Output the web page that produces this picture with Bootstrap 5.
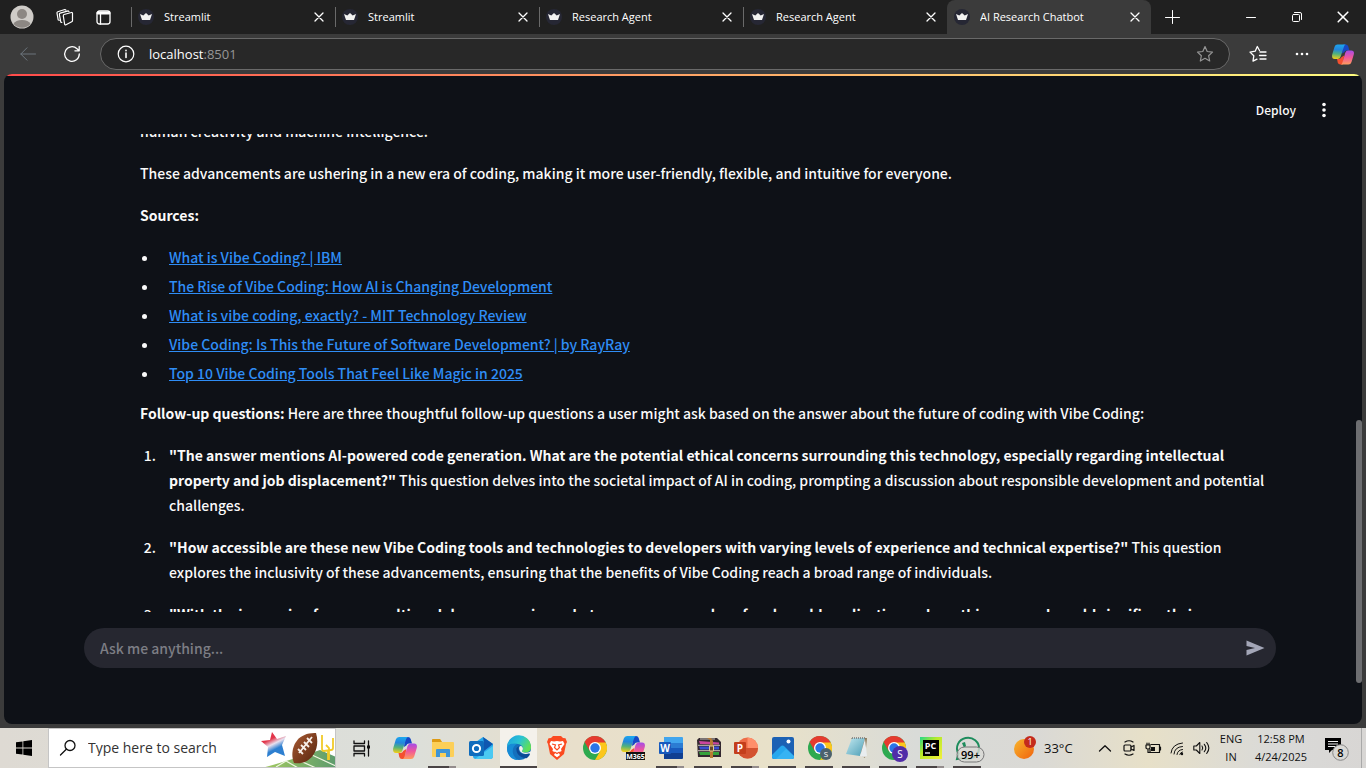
<!DOCTYPE html>
<html lang="en" data-bs-theme="dark">
<head>
<meta charset="utf-8">
<meta name="viewport" content="width=device-width, initial-scale=1">
<title>AI Research Chatbot</title>
<link href="https://cdn.jsdelivr.net/npm/bootstrap@5.3.0/dist/css/bootstrap.min.css" rel="stylesheet">
<style>
  body { background:#3b3b3b; color:#fff; font-family:"Open Sans","Noto Sans",sans-serif; font-size:12px; line-height:16px; }
  button { background:none; border:0; padding:0; color:inherit; font:inherit; }
  svg { display:block; flex:none; overflow:visible; }
  .ln { fill:none; stroke:currentColor; stroke-linecap:round; stroke-linejoin:round; }

  /* title bar */
  .titlebar { height:34px; background:#202020; }
  .lead-icons { width:131px; padding:0 20px 0 10px; gap:19px; }
  .tabitem { flex:0 1 204px; min-width:0; height:34px; padding:0 11px 0 7px; position:relative; font-size:11px; }
  .tabitem::before { content:""; position:absolute; left:0; top:7px; height:20px; width:1px; background:#6a6a6a; }
  .tabitem.current { background:#3b3b3b; border-radius:8px 8px 0 0; }
  .tabitem.current::before { content:none; }
  .fav { margin-right:10px; }
  .winbtn { width:46px; height:34px; display:grid; place-items:center; }
  .newtab { width:41px; }

  /* toolbar */
  .toolbar { height:40px; padding:0 12px 0 18px; }
  .navbtn { width:20px; height:20px; display:grid; place-items:center; }
  .pilotbtn { width:22px; height:22px; margin-left:20px; }
  .urlbox { height:32px; margin:0 18px; background:#282828; border:1px solid #696969; border-radius:16px; padding:0 15px 0 16px; }
  .urlbox .addr { font-size:13px; margin-left:14px; }
  .addr .port { color:#969696; }

  /* application */
  .app { margin:0 4px 4px; background:#0e1117; border-radius:8px; position:relative; overflow:hidden; font-family:"Noto Sans CJK SC","Source Sans Pro",sans-serif; font-size:14px; line-height:26px; min-height:0; color:#fafafa; }
  .rainbow { height:2px; flex:none; background:linear-gradient(90deg,#ff4b4b,#fffd80); }
  .apphead { height:58px; flex:none; padding:10px 30px 0 0; gap:20px; font-size:12px; font-weight:500; }
  .chat { padding:0 86px 0 136px; min-height:0; }
  .chat-body { margin-top:-16px; font-weight:500; }
  .chat p { margin-bottom:16px; }
  .chat ul, .chat ol { padding:0; }
  .chat li { margin:0 0 0 19px; padding-left:10px; }
  .chat ul { margin:0 0 14px; }
  .chat ul li + li { margin-top:3px; }
  .chat ul a { color:#2f8df5; }
  .chat ol { margin:17px 0 0; line-height:25px; }
  .chat ol li + li { margin-top:17px; }
  .askwrap { padding:16px 86px 56px 80px; }
  .ask { height:40px; background:#262730; border-radius:20px; padding:0 11px 0 16px; }
  .ask input { background:none; border:0; outline:0; color:#fafafa; font-weight:500; min-width:0; padding:0; }
  .ask input::placeholder { color:#7d7e85; opacity:1; }
  .thumb { position:absolute; right:0; bottom:41px; width:6px; height:263px; border-radius:3px; background:#6d6e71; }

  /* taskbar */
  .taskbar { height:40px; flex:none; color:#111; background:linear-gradient(90deg,#dedad3 0,#dcdfda 30%,#e8dfcb 42%,#e8e1c9 57%,#d9dbd8 67%,#dad9d5 76%,#e7e0c8 84%,#dadad8 93%,#d8d6d4 100%); }
  .startbtn { width:48px; height:40px; display:grid; place-items:center; flex:none; }
  .searchbox { width:288px; height:40px; background:#fff; border:1px solid #c5c5c5; padding-left:10px; overflow:hidden; }
  .searchbox input { border:0; outline:0; background:none; color:#222; width:170px; padding:0; margin-left:11px; font-size:14px; }
  .searchbox input::placeholder { color:#333; opacity:1; }
  .tk { width:37px; height:40px; position:relative; display:grid; place-items:center; flex:none; }
  .tk.taskview { margin:0 6px 0 7px; }
  .tk.open::after { content:""; position:absolute; left:4px; bottom:0; width:28px; height:2px; background:#4a4445; }
  .tk.multi::after { background:linear-gradient(90deg,#4a4445 75%,#938c8c 75%); }
  .tk.front { background:#f4f1eb; }
  .tk.front::after { left:0; width:37px; }
  .pinned { column-gap:1px; }
  .tray { padding-right:4px; }
  .tray button { width:24px; height:40px; display:grid; place-items:center; }
  .temp { font-size:13px; width:49px; }
  .stacked { font-size:11px; line-height:18px; text-align:center; }
  .lang { width:36px; }
  .clock { width:64px; }
  .tray .notif { width:48px; }
  .edge-line { width:1px; height:40px; background:#a9a9a9; }
</style>
</head>
<body class="d-flex flex-column vh-100 overflow-hidden">

<svg width="0" height="0" class="position-absolute" aria-hidden="true">
  <defs>
    <linearGradient id="cpA" x1=".4" y1="0" x2=".3" y2="1"><stop offset="0" stop-color="#1ca6ee"/><stop offset=".35" stop-color="#2486dc"/><stop offset=".65" stop-color="#52b27a"/><stop offset="1" stop-color="#f5cf17"/></linearGradient>
    <linearGradient id="cpB" x1="0" y1="0" x2="0" y2="1"><stop offset="0" stop-color="#a54be8"/><stop offset=".5" stop-color="#f0579b"/><stop offset="1" stop-color="#ff9d5c"/></linearGradient>
    <linearGradient id="edA" x1="0" y1="0" x2="1" y2=".5"><stop offset="0" stop-color="#1b9de2"/><stop offset=".55" stop-color="#2bc3d2"/><stop offset="1" stop-color="#5fdf57"/></linearGradient>
    <linearGradient id="wea" x1="0" y1="0" x2="1" y2="1"><stop offset="0" stop-color="#f8b62c"/><stop offset="1" stop-color="#f0620f"/></linearGradient>
    <linearGradient id="ball" x1="0" y1="0" x2="1" y2="1"><stop offset="0" stop-color="#a95a33"/><stop offset="1" stop-color="#57260f"/></linearGradient>
    <linearGradient id="star" x1=".2" y1="0" x2=".7" y2="1"><stop offset=".3" stop-color="#e2354a"/><stop offset=".5" stop-color="#e8e0ee"/><stop offset=".7" stop-color="#2d7fd0"/></linearGradient>
    <linearGradient id="grass" x1="0" y1="0" x2="1" y2="0"><stop offset="0" stop-color="#a7cd60"/><stop offset="1" stop-color="#5d9b6d"/></linearGradient>
    <linearGradient id="note" x1="0" y1="0" x2="1" y2="1"><stop offset="0" stop-color="#c3e9f0"/><stop offset="1" stop-color="#4b9db5"/></linearGradient>
    <linearGradient id="pyc" x1="0" y1="0" x2="1" y2="1"><stop offset="0" stop-color="#21d789"/><stop offset=".4" stop-color="#b6ea2a"/><stop offset="1" stop-color="#f2ef38"/></linearGradient>
    <symbol id="copilot" viewBox="0 0 24 22">
      <path d="M5.500 16h2q2 0 2.700-2l3-2-1.200 10H9q-2 0-2.700-2z" fill="#f4502f"/>
      <path d="M12 0h3q2 0 2.700 2L19 6.500h-3q-2 0-2.700 2L11 10z" fill="#1748c6"/>
      <path d="M6 0h9q-1.500.5-2 2.500L9.500 13.300Q8.700 16 6.500 16H3C0 16-.4 13 .4 10.500L2.800 2.500Q3.600 0 6 0z" fill="url(#cpA)"/>
      <path d="M18 22H9.500q1.500-.5 2-2.500L14.500 9q.8-2.500 3-2.500H21c3 0 3.400 2.500 2.600 5l-2.400 8Q20.400 22 18 22z" fill="url(#cpB)"/>
    </symbol>
    <symbol id="chrome" viewBox="0 0 24 24">
      <circle cx="12" cy="12" r="12" fill="#2da94f"/>
      <path d="M22.400 6A12 12 0 0 1 12 24l5.200-9L12 6z" fill="#fcc61c"/>
      <path d="M1.600 6L6.800 15 12 6.500h10.600A12 12 0 0 0 1.600 6z" fill="#e53b2f"/>
      <circle cx="12" cy="12" r="6" fill="#fff"/><circle cx="12" cy="12" r="4.700" fill="#2b75e8"/>
    </symbol>
    <symbol id="crown" viewBox="0 0 16 16">
      <circle cx="8" cy="8" r="8" fill="#262734"/>
      <path d="M2 5l3.300 1.500L8 4l2.700 2.500L14 5l-2 6H4z" fill="#f2f2f2"/>
    </symbol>
    <symbol id="cross" viewBox="0 0 10 10"><path d="M1 1l8 8M9 1l-8 8" class="ln" stroke-width="1.300"/></symbol>
  </defs>
</svg>

<header>
  <div class="titlebar d-flex align-items-center">
    <div class="lead-icons d-flex align-items-center flex-shrink-0 justify-content-between">
      <button aria-label="Profile"><svg width="24" height="24" viewBox="0 0 24 24"><circle cx="12" cy="12" r="11.500" fill="#cfccc8"/><circle cx="12" cy="9" r="5" fill="#8c8783"/><path d="M3.500 19a9 6 0 0 1 17 0 11.500 11.500 0 0 1-17 0z" fill="#8c8783"/></svg></button>
      <button aria-label="Workspaces"><svg width="18" height="18" viewBox="0 0 18 18" class="ln" stroke-width="1.200"><path d="M8 6.500l7.500-2q1-.2 1 .8v7.200q0 1-.8 1.300L10 16.800q-1.300.5-1.400-.8L7.300 8q0-1.200.7-1.500zM5.800 14.500l-1-.4-1.400-7.500q-.2-1.200.8-1.500l8-2.300.8.900M3.200 12.300l-1-.3L1 5.200Q.8 4 1.800 3.700l7-2.200 1 .6"/></svg></button>
      <button aria-label="Tab actions"><svg width="15" height="15" viewBox="0 0 15 15" class="ln" stroke-width="1.300"><rect x="1" y="1" width="13" height="13" rx="2.500"/><path d="M2 3h11" stroke-width="3"/><path d="M4.500 4v10"/></svg></button>
    </div>
    <div class="tabitem d-flex align-items-center"><svg class="fav" width="16" height="16"><use href="#crown"/></svg><span class="flex-fill text-truncate">Streamlit</span><button aria-label="Close tab"><svg width="10" height="10"><use href="#cross"/></svg></button></div>
    <div class="tabitem d-flex align-items-center"><svg class="fav" width="16" height="16"><use href="#crown"/></svg><span class="flex-fill text-truncate">Streamlit</span><button aria-label="Close tab"><svg width="10" height="10"><use href="#cross"/></svg></button></div>
    <div class="tabitem d-flex align-items-center"><svg class="fav" width="16" height="16"><use href="#crown"/></svg><span class="flex-fill text-truncate">Research Agent</span><button aria-label="Close tab"><svg width="10" height="10"><use href="#cross"/></svg></button></div>
    <div class="tabitem d-flex align-items-center"><svg class="fav" width="16" height="16"><use href="#crown"/></svg><span class="flex-fill text-truncate">Research Agent</span><button aria-label="Close tab"><svg width="10" height="10"><use href="#cross"/></svg></button></div>
    <div class="tabitem current d-flex align-items-center"><svg class="fav" width="16" height="16"><use href="#crown"/></svg><span class="flex-fill text-truncate">AI Research Chatbot</span><button aria-label="Close tab"><svg width="10" height="10"><use href="#cross"/></svg></button></div>
    <button class="winbtn newtab" aria-label="New tab"><svg width="14" height="14" viewBox="0 0 14 14" class="ln"><path d="M7.500.5v13M.5 7.500h14"/></svg></button>
    <button class="winbtn ms-auto" aria-label="Minimize"><svg width="10" height="10" viewBox="0 0 10 10" class="ln"><path d="M.5 5.500h9"/></svg></button>
    <button class="winbtn" aria-label="Restore"><svg width="10" height="10" viewBox="0 0 10 10" class="ln"><rect x=".5" y="2.500" width="7" height="7" rx="1"/><path d="M2.500.5H8q1.500 0 1.500 1.500v5.500"/></svg></button>
    <button class="winbtn" aria-label="Close"><svg width="12" height="12"><use href="#cross"/></svg></button>
  </div>
  <div class="toolbar d-flex align-items-center">
    <button class="navbtn text-secondary" aria-label="Back"><svg width="16" height="14" viewBox="0 0 16 14" class="ln"><path d="M15.500 7H.8M7 .8L.8 7 7 13.200"/></svg></button>
    <button class="navbtn ms-4" aria-label="Refresh"><svg width="16" height="16" viewBox="0 0 16 16" class="ln" stroke-width="1.300"><path d="M15.300 8A7.300 7.300 0 1 1 13 2.700L15 4.600M15.200.5v4.300h-4.300"/></svg></button>
    <div class="urlbox d-flex align-items-center flex-fill">
      <svg width="18" height="18" viewBox="0 0 18 18" class="ln" stroke-width="1.200"><circle cx="9" cy="9" r="7.800"/><path d="M9 8v4.500M9 5.300v.4" stroke-width="1.600"/></svg>
      <span class="addr flex-fill">localhost<span class="port">:8501</span></span>
      <button class="text-white-50" aria-label="Add to favorites"><svg width="18" height="18" viewBox="0 0 18 18" class="ln" stroke-width="1.200"><path d="M9 1.500l2.200 5 5.300.6-3.900 3.600 1.100 5.300L9 13.300 4.300 16l1.100-5.300L1.500 7.100l5.300-.6z"/></svg></button>
    </div>
    <button class="navbtn" aria-label="Favorites"><svg width="18" height="18" viewBox="0 0 18 18" class="ln" stroke-width="1.300"><path d="M10.500 5.500L8.300 1.500 6.200 6.200 1 7.100l3.800 3.700L4 16.200l4-2M11 7h6M10.500 10.500H17M11 14h6"/></svg></button>
    <button class="navbtn ms-4" aria-label="Settings and more"><svg width="14" height="4" viewBox="0 0 14 4" fill="currentColor"><circle cx="2" cy="2" r="1.300"/><circle cx="7" cy="2" r="1.300"/><circle cx="12" cy="2" r="1.300"/></svg></button>
    <button class="pilotbtn" aria-label="Copilot"><svg width="22" height="21"><use href="#copilot"/></svg></button>
  </div>
</header>

<main class="app d-flex flex-column flex-fill">
  <div class="rainbow"></div>
  <div class="apphead d-flex align-items-center justify-content-end">
    <button>Deploy</button>
    <button aria-label="Menu"><svg width="16" height="16" viewBox="0 0 16 16" fill="currentColor"><circle cx="8" cy="2.500" r="1.800"/><circle cx="8" cy="8" r="1.800"/><circle cx="8" cy="13.500" r="1.800"/></svg></button>
  </div>
  <section class="chat flex-fill overflow-hidden">
    <div class="chat-body">
      <p>human creativity and machine intelligence.</p>
      <p>These advancements are ushering in a new era of coding, making it more user-friendly, flexible, and intuitive for everyone.</p>
      <p><strong>Sources:</strong></p>
      <ul>
        <li><a href="#">What is Vibe Coding? | IBM</a></li>
        <li><a href="#">The Rise of Vibe Coding: How AI is Changing Development</a></li>
        <li><a href="#">What is vibe coding, exactly? - MIT Technology Review</a></li>
        <li><a href="#">Vibe Coding: Is This the Future of Software Development? | by RayRay</a></li>
        <li><a href="#">Top 10 Vibe Coding Tools That Feel Like Magic in 2025</a></li>
      </ul>
      <p><strong>Follow-up questions:</strong> Here are three thoughtful follow-up questions a user might ask based on the answer about the future of coding with Vibe Coding:</p>
      <ol>
        <li><strong>"The answer mentions AI-powered code generation. What are the potential ethical concerns surrounding this technology, especially regarding intellectual property and job displacement?"</strong> This question delves into the societal impact of AI in coding, prompting a discussion about responsible development and potential challenges.</li>
        <li><strong>"How accessible are these new Vibe Coding tools and technologies to developers with varying levels of experience and technical expertise?"</strong> This question explores the inclusivity of these advancements, ensuring that the benefits of Vibe Coding reach a broad range of individuals.</li>
        <li><strong>"With the increasing focus on multimodal programming, what are some examples of real-world applications where this approach could significantly improve</strong></li>
      </ol>
    </div>
  </section>
  <div class="askwrap">
    <form class="ask d-flex align-items-center">
      <input class="flex-fill" type="text" placeholder="Ask me anything..." aria-label="Ask me anything">
      <button type="button" aria-label="Send"><svg width="19" height="16" viewBox="0 0 19 16"><path d="M.5.500L18.500 8 .5 15.500V10L9 8 .5 6z" fill="#a3a6b7"/></svg></button>
    </form>
  </div>
  <div class="thumb"></div>
</main>

<footer class="taskbar d-flex align-items-center">
  <button class="startbtn" aria-label="Start"><svg width="16" height="16" viewBox="0 0 16 16"><path d="M0 2.300L6.500 1.400V7.500H0zM7.300 1.200L16 0v7.500H7.300zM0 8.400h6.500v6.200L0 13.700zM7.300 8.400H16V16l-8.700-1.200z"/></svg></button>
  <div class="searchbox d-flex align-items-center flex-shrink-0">
    <svg width="18" height="18" viewBox="0 0 18 18" class="ln" stroke-width="1.300"><circle cx="11" cy="6.500" r="5"/><path d="M7.300 10.200L1.500 16"/></svg>
    <input type="text" placeholder="Type here to search" aria-label="Type here to search">
    <svg class="ms-auto" width="78" height="38" viewBox="0 0 78 38">
      <path d="M0 40Q34 31 62 21L78 28V40z" fill="url(#grass)"/>
      <path d="M18 38l10-6 14 8M38 30l20 9M54 26l26 12" fill="none" stroke="#eef6df" stroke-width="1.200"/>
      <path d="M14 3l5 7 9-3-4 9 3 11-10-4-8 5 1-10-7-6 9-1z" fill="url(#star)"/>
      <path d="M36 34C31 22 37 3 58 4c5 16-5 33-22 30z" fill="url(#ball)"/>
      <path d="M41 24L54 8M40 20l5 5M43 16l5 5M46 13l5 5M49 9l5 5" stroke="#f7efe9" stroke-width="1.800" fill="none"/>
      <path d="M64 6v14q0 2 2 2l7-1q2 0 2-2V9M70 22v9M68 16l3 3v12" stroke="#f1ca28" stroke-width="1.800" fill="none"/>
    </svg>
  </div>
  <button class="tk taskview" aria-label="Task view"><svg width="18" height="17" viewBox="0 0 18 17" class="ln" stroke-width="1.300"><path d="M1 1v2.500h10.500V1M1 16v-2.500h10.500V16M1 6h10.500v5H1zM15.500 1v15"/><path d="M14 5.500h3v3h-3z" fill="#111" stroke="none"/></svg></button>
  <div class="pinned d-flex flex-shrink-0">
    <button class="tk" aria-label="Copilot"><svg width="24" height="22"><use href="#copilot"/></svg></button>
    <button class="tk open multi" aria-label="File Explorer"><svg width="22" height="19" viewBox="0 0 22 19"><path d="M0 1q0-1 1-1h7l2 3h11q1 0 1 1v13q0 1-1 1H1q-1 0-1-1z" fill="#fccf58"/><path d="M0 3V1q0-1 1-1h7l2 3z" fill="#dd9a14"/><path d="M4 18v-7q0-1 1-1h12q1 0 1 1v7h-4v-4H8v4z" fill="#3f95d6"/></svg></button>
    <button class="tk" aria-label="Outlook"><svg width="24" height="22" viewBox="0 0 24 22"><path d="M4 7L14 0l10 7v12q0 3-3 3H7q-3 0-3-3z" fill="#28a8ea"/><path d="M14 0l10 7-9 7V6z" fill="#0f57b0"/><path d="M6 22L24 9v10q0 3-3 3z" fill="#4bc9f2"/><rect y="4" width="15" height="15" rx="1.500" fill="#0f6cbd"/><circle cx="7.500" cy="11.500" r="3.600" fill="none" stroke="#fff" stroke-width="2"/></svg></button>
    <button class="tk open front" aria-label="Edge"><svg width="24" height="24" viewBox="0 0 24 24"><circle cx="12" cy="12" r="12" fill="#1470bd"/><path d="M0 12A12 12 0 0 1 24 10.500C24.500 15 21 17 17 16.500c-2-.3-2.500-1.200-1.500-2.500C17 11 14.500 8.500 11 8 5 7.300 1.500 8.500 0 12z" fill="url(#edA)"/><path d="M0 12C1 7 7 7 10 8.500c-4 1-6 7-2.500 12 1 1.500 2 2.500 3.500 3.500C4 24-.3 18 0 12z" fill="#178bd6"/><path d="M12 10c-2 5 2 10 10 7.500l1 .8c-.8 1.800-2 3-3.500 4C13 22 8.500 17 9.500 12z" fill="#0c4a96"/><path d="M12.300 11c-1 4 3 8.500 10 6.300.7 0 1 .7.600 1.400 2-3 1-3.500.2-3-2.500 1.500-6 1.200-7.600.3-1-.8-.3-1.500.3-2.600.8-1.800-2-5-3.500-2.400z" fill="#f4f1eb"/></svg></button>
    <button class="tk" aria-label="Brave"><svg width="20" height="24" viewBox="0 0 20 24"><path d="M6 0h8l2 2 2.500.3L20 6l-1 2-2 10-7 6-7-6L1 8 0 6l1.500-3.700L4 2z" fill="#fb4a20"/><path d="M4 5l3 .6 3-.6 3 .6 3-.6 1.500 3-3.500 5 .6 2-3 1.500L13 19l-3 2.300L7 19l1.400-2.500-3-1.500.6-2-3.500-5z" fill="#fff"/><path d="M5 8l3.500 1-1 2.500L10 14l2.500-2.500-1-2.500L15 8M7.500 16l2.500 1.500 2.500-1.500" fill="none" stroke="#fb4a20" stroke-width="1.200"/></svg></button>
    <button class="tk" aria-label="Chrome"><svg width="24" height="24"><use href="#chrome"/></svg></button>
    <button class="tk" aria-label="Microsoft 365 Copilot"><svg width="24" height="24" viewBox="0 0 24 24"><use href="#copilot" width="24" height="22"/><rect x="5" y="16" width="19" height="8" fill="#111"/><text x="14.500" y="22.500" text-anchor="middle" font-size="7" font-weight="700" fill="#fff">M365</text></svg></button>
    <button class="tk open multi" aria-label="Word"><svg width="24" height="22" viewBox="0 0 24 22"><path d="M5 0h18q1 0 1 1v5H5z" fill="#41a5ee"/><path d="M5 6h19v5H5z" fill="#2b7cd3"/><path d="M5 11h19v5H5z" fill="#185abd"/><path d="M5 16h19v5q0 1-1 1H5z" fill="#103f91"/><rect y="5" width="12" height="12" rx="1" fill="#185abd"/><text x="6" y="14.500" text-anchor="middle" font-size="10" font-weight="700" fill="#fff">W</text></svg></button>
    <button class="tk open" aria-label="WinRAR"><svg width="24" height="20" viewBox="0 0 24 20"><path d="M2 0h18l4 4v15H1L0 2z" fill="#332830"/><path d="M2 3l20 1.500v2L3 6z" fill="#c9469e"/><path d="M2 8.500h20v3H3z" fill="#3950d0"/><path d="M2 14h20v3H3z" fill="#36a23c"/><path d="M1 7.300h22M1 12.700h22M3 1h15" stroke="#c7c0b8"/><path d="M10 0l3 2v18h3V3l-2-3z" fill="#b77a32"/><path d="M12.500 8h4v5h-4z" fill="#654728" stroke="#dfca90"/></svg></button>
  </div>
  <button class="tk open multi" aria-label="PowerPoint"><svg width="24" height="22" viewBox="0 0 24 22"><circle cx="13.500" cy="11" r="10.500" fill="#ed6c47"/><path d="M13.500.5A10.500 10.500 0 0 1 24 11H13.500z" fill="#ff8f6b"/><path d="M3 11h21a10.500 10.500 0 0 1-21 0z" fill="#d35230"/><rect y="5" width="12" height="12" rx="1" fill="#c43e1c"/><text x="6" y="14.500" text-anchor="middle" font-size="10" font-weight="700" fill="#fff">P</text></svg></button>
  <button class="tk open" aria-label="Photos"><svg width="22" height="22" viewBox="0 0 22 22"><rect width="22" height="22" rx="2" fill="#1c61b4"/><path d="M0 18L8.500 9.500q2-2 4 0L22 19v1q0 2-2 2H2q-2 0-2-2z" fill="#26a7ee"/><path d="M4 22L14 12l8 7v1q0 2-2 2z" fill="#46c0f7" opacity=".5"/><circle cx="16.500" cy="4.500" r="2" fill="#fff"/></svg></button>
  <button class="tk open" aria-label="Chrome, profile S"><svg width="24" height="24" viewBox="0 0 24 24"><use href="#chrome" width="24" height="24"/><circle cx="18" cy="18" r="6" fill="#4c626c"/><text x="18" y="21" text-anchor="middle" font-size="8" fill="#fff">S</text></svg></button>
  <button class="tk open" aria-label="Notepad"><svg width="23" height="22" viewBox="0 0 23 22"><path d="M6 1h16l-2 20-3-2z" fill="#8f7b5c"/><path d="M7 1h13l-5 18L1 17z" fill="url(#note)"/><path d="M20 2l2 17-3 1-4-1z" fill="#e9edef"/><path d="M7 1h14" stroke="#777" stroke-width="1.500" stroke-dasharray="1 1"/></svg></button>
  <button class="tk open" aria-label="Chrome, second profile"><svg width="26" height="26" viewBox="-1 -1 26 26"><use href="#chrome" width="24" height="24"/><circle cx="18" cy="18" r="8" fill="#512da8"/><text x="18" y="21.500" text-anchor="middle" font-size="10" fill="#fff">S</text></svg></button>
  <button class="tk open multi" aria-label="PyCharm"><svg width="22" height="22" viewBox="0 0 22 22"><rect width="22" height="22" fill="url(#pyc)"/><rect x="3" y="3" width="16" height="16" fill="#000"/><text x="10.500" y="11.500" text-anchor="middle" font-size="9" font-weight="700" fill="#fff">PC</text><path d="M5 16h5" stroke="#fff" stroke-width="1.300"/></svg></button>
  <button class="tk open" aria-label="WhatsApp"><svg width="29" height="28" viewBox="-2 -1 29 28"><path d="M2 24l1.500-5.500A11 10.500 0 1 1 9 23z" fill="none" stroke="#1d8c5c" stroke-width="2"/><path d="M7 8l3-1 1 4-2 2" fill="#1d8c5c"/><rect x="2" y="12" width="27" height="15" rx="7.500" fill="#d9dad6" fill-opacity=".8" stroke="#777"/><text x="15.500" y="23.500" text-anchor="middle" font-size="11" font-weight="600" fill="#000">99+</text></svg></button>

  <div class="tray d-flex align-items-center ms-auto flex-shrink-0">
    <svg width="22" height="24" viewBox="0 0 22 24"><circle cx="10" cy="13" r="10" fill="url(#wea)"/><circle cx="16" cy="6" r="6" fill="#c42b1c"/><text x="16" y="9" text-anchor="middle" font-size="9" fill="#fff">1</text></svg>
    <span class="temp ms-2">33°C</span>
    <button aria-label="Show hidden icons"><svg width="12" height="7" viewBox="0 0 12 7" class="ln" stroke-width="1.300"><path d="M.5 6L6 .8 11.500 6"/></svg></button>
    <button aria-label="Meet now"><svg width="12" height="16" viewBox="0 0 12 16" class="ln" stroke-width="1.200"><rect x="1" y="5" width="7" height="6" rx="1"/><path d="M8 7l3-1.500v5L8 9M2 2q4-2.500 8 0M2 14q4 2.500 8 0"/></svg></button>
    <button aria-label="Battery"><svg width="16" height="12" viewBox="0 0 16 12" class="ln" stroke-width="1.200"><path d="M6 2.500h8.500v8H5V7M15.500 5v3M1 3h4v2.500q0 1.500-2 1.500T1 5.500zM2 1v2M4 1v2M3 7v3.500h2"/><path d="M6 5h4v4H6z" fill="#111" stroke="none"/></svg></button>
    <button aria-label="Network"><svg width="14" height="13" viewBox="0 0 14 13" class="ln"><path d="M1 11Q2 2 12.500 1M4 12Q4.500 5 12.500 4.500M7 12.500q.5-4.500 5.500-5M9.800 12.500q.2-2 2.700-2.500"/><circle cx="12" cy="12" r="1.200" fill="#111" stroke="none"/></svg></button>
    <button aria-label="Volume"><svg width="17" height="14" viewBox="0 0 17 14" class="ln" stroke-width="1.100"><path d="M.8 5v4h2.500l3.500 3.500v-11L3.300 5zM9 5q1.500 2 0 4M11.300 3.300q3 3.700 0 7.400M13.700 1.500q4.300 5.500 0 11"/></svg></button>
    <div class="stacked lang">ENG<br>IN</div>
    <div class="stacked clock">12:58 PM<br>4/24/2025</div>
    <button class="notif" aria-label="Notifications"><svg width="26" height="26" viewBox="0 0 26 26"><path d="M1 3h16v12H8l-3 3v-3H1z" fill="#000"/><path d="M4 6.500h10M4 9h10M4 11.500h7" stroke="#eee"/><circle cx="16.500" cy="17.500" r="7.800" fill="#d9d8d5" stroke="#888"/><text x="16.500" y="21.500" text-anchor="middle" font-size="11" font-weight="600" fill="#000">8</text></svg></button>
    <div class="edge-line"></div>
  </div>
</footer>
<script src="https://cdn.jsdelivr.net/npm/bootstrap@5.3.0/dist/js/bootstrap.bundle.min.js"></script>
</body>
</html>
